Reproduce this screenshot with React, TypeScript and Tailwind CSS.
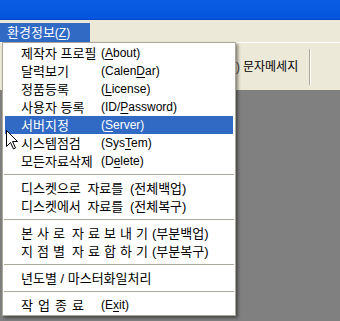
import type { ReactNode } from 'react';
import clsx from 'clsx';

// 환경정보 menu dropped down over the main window

function Item({ label, hint, active }: { label: ReactNode; hint?: ReactNode; active?: boolean }) {
  return (
    <div
      className={clsx(
        'mx-[2px] flex h-[18px] items-center pl-[16px] whitespace-nowrap',
        active ? 'bg-[#316AC5] text-white' : 'text-black'
      )}
    >
      {hint ? <span className="w-[80px] shrink-0">{label}</span> : <span>{label}</span>}
      {hint && <span className="text-[12px]">{hint}</span>}
    </div>
  );
}

function Sep() {
  return (
    <div className="flex h-[9px] items-center px-[1px]">
      <div className="h-px w-full bg-[#ACA899]" />
    </div>
  );
}

function Spaced({ chars, w }: { chars: string[]; w: string }) {
  return (
    <>
      {chars.map((c, i) =>
        c === ' ' ? (
          <span key={i} className="inline-block w-[3px]" />
        ) : (
          <span key={i} className={clsx('inline-block', w)}>
            {c}
          </span>
        )
      )}
    </>
  );
}

const U = ({ children }: { children: ReactNode }) => (
  <span className="underline underline-offset-2">{children}</span>
);

export default function App() {
  return (
    <div className="relative flex h-[321px] w-[340px] flex-col overflow-hidden bg-[#808080] font-['Liberation_Sans','Noto_Sans_CJK_KR',sans-serif] text-[12px] leading-none">
      {/* title bar */}
      <div className="h-[20px] shrink-0 border-b border-[#0044C8] bg-gradient-to-b from-[#0A5FE3] to-[#0554DE]" />

      {/* menu bar */}
      <div className="flex h-[22px] shrink-0 items-end bg-[#ECE9D8]">
        <div className="flex h-[19px] w-[90px] items-center bg-[#316AC5] pl-[7px] text-[13px] text-white">
          환경정보<span className="text-[12px]">(<U>Z</U>)</span>
        </div>
      </div>

      {/* toolbar */}
      <div className="flex h-[48px] shrink-0 items-center border-t border-white bg-[#ECE9D8]">
        <div className="w-[236px] shrink-0" />
        <span className="text-[#333]">)</span>
        <span className="ml-[3px] text-black">문자메세지</span>
        <div className="ml-[11px] flex h-[36px] self-center">
          <div className="w-px bg-[#ACA899]" />
          <div className="w-px bg-white" />
        </div>
      </div>

      {/* dropdown */}
      <div className="absolute left-[2px] top-[42px] w-[234px] border border-[#ACA899] bg-white py-[1px] text-[13px] shadow-[2px_2px_3px_rgba(0,0,0,0.45)]">
        <Item label="제작자 프로필" hint={<>(<U>A</U>bout)</>} />
        <Item label="달력보기" hint={<>(Calen<U>D</U>ar)</>} />
        <Item label="정품등록" hint={<>(<U>L</U>icense)</>} />
        <Item label="사용자 등록" hint={<>(ID/<U>P</U>assword)</>} />
        <Item label="서버지정" hint={<>(<U>S</U>erver)</>} active />
        <Item label="시스템점검" hint={<>(Sys<U>T</U>em)</>} />
        <Item label="모든자료삭제" hint={<>(D<U>e</U>lete)</>} />
        <Sep />
        <Item label={<span className="[word-spacing:3px]">디스켓으로 자료를 (전체백업)</span>} />
        <Item label={<span className="[word-spacing:3px]">디스켓에서 자료를 (전체복구)</span>} />
        <Sep />
        <Item
          label={
            <>
              <Spaced chars={['본', '사', '로', ' ', '자', '료', '보', '내', '기']} w="w-[16px]" />
              (부분백업)
            </>
          }
        />
        <Item
          label={
            <>
              <Spaced chars={['지', '점', '별', ' ', '자', '료', '합', '하', '기']} w="w-[16px]" />
              (부분복구)
            </>
          }
        />
        <Sep />
        <Item label="년도별 / 마스터화일처리" />
        <Sep />
        <Item
          label={<Spaced chars={['작', '업', '종', '료']} w="w-[17px]" />}
          hint={<>(E<U>x</U>it)</>}
        />
      </div>

      {/* mouse pointer */}
      <svg className="absolute left-[6px] top-[130px]" width="12" height="20" viewBox="0 0 12 20">
        <path
          d="M0.5 0.5 L0.5 16.5 L4.5 12.5 L7.5 19 L9.5 18 L6.5 11.5 L11.5 11.5 Z"
          fill="white"
          stroke="black"
          strokeWidth="1"
        />
      </svg>
    </div>
  );
}
